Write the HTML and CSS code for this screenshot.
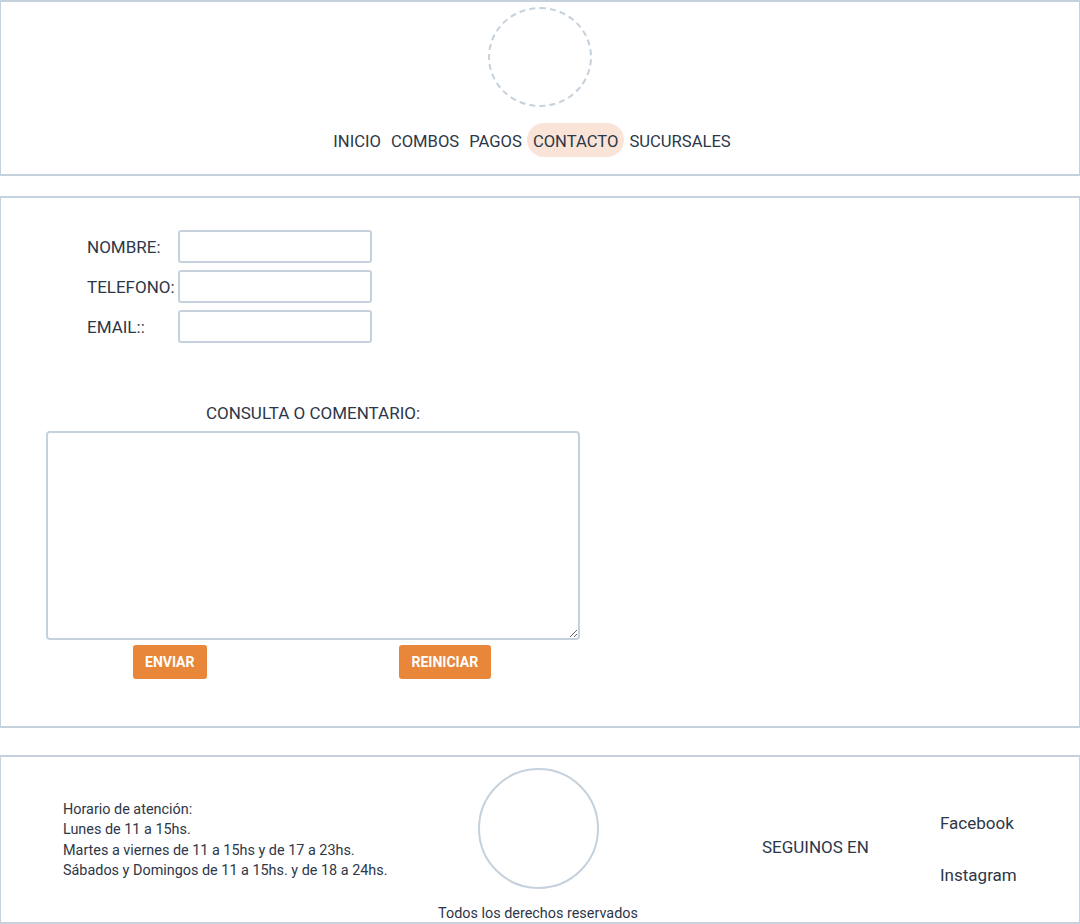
FILE: index.html
```html
<!DOCTYPE html>
<html lang="es">
<head>
<meta charset="utf-8">
<title>Contacto</title>
<link rel="stylesheet" href="styles.css">
</head>
<body>
<header class="header">
  <div class="logo"></div>
  <nav class="nav">
    <a class="nav-item" href="#">INICIO</a>
    <a class="nav-item" href="#">COMBOS</a>
    <a class="nav-item" href="#">PAGOS</a>
    <a class="nav-item active" href="#">CONTACTO</a>
    <a class="nav-item" href="#">SUCURSALES</a>
  </nav>
</header>

<main class="main">
  <form class="form">
    <div class="fields">
      <div class="row"><label class="label">NOMBRE:</label><input class="input" type="text"></div>
      <div class="row"><label class="label">TELEFONO:</label><input class="input" type="text"></div>
      <div class="row"><label class="label">EMAIL::</label><input class="input" type="text"></div>
    </div>
    <div class="consulta">
      <label class="consulta-label">CONSULTA O COMENTARIO:</label>
      <textarea class="textarea"></textarea>
      <div class="buttons">
        <button class="btn" type="submit">ENVIAR</button>
        <button class="btn btn-wide" type="reset">REINICIAR</button>
      </div>
    </div>
  </form>
</main>

<footer class="footer">
  <div class="hours">
    <p>Horario de atención:</p>
    <p>Lunes de 11 a 15hs.</p>
    <p>Martes a viernes de 11 a 15hs y de 17 a 23hs.</p>
    <p>Sábados y Domingos de 11 a 15hs. y de 18 a 24hs.</p>
  </div>
  <div class="center">
    <div class="footer-logo"></div>
    <p class="copy">Todos los derechos reservados</p>
  </div>
  <div class="follow">SEGUINOS EN</div>
  <ul class="social">
    <li><a href="#">Facebook</a></li>
    <li><a href="#">Instagram</a></li>
  </ul>
</footer>
</body>
</html>
```

FILE: styles.css
```css
* { box-sizing: border-box; }

body {
  margin: 0;
  font-family: Roboto, "Liberation Sans", sans-serif;
  color: #2d3748;
  background: #fff;
}

.header {
  border: 1px solid #c5d1dc;
  border-width: 2px 1px;
  display: flex;
  flex-direction: column;
  align-items: center;
  padding: 5px 0 17px;
}

.logo {
  width: 104px;
  height: 100px;
  border: 2px dashed #c5d1dc;
  border-radius: 50%;
}

.nav {
  display: flex;
  margin-top: 16px;
  padding-right: 16px;
}

.nav-item {
  color: #2d3748;
  text-decoration: none;
  font-size: 16.6px;
  line-height: 37px;
  height: 34px;
  padding: 0 5px;
  border-radius: 17px;
}

.nav-item.active {
  background: #f9e4d7;
  padding: 0 6px;
}

.main {
  margin-top: 20px;
  border: 1px solid #c5d1dc;
  border-width: 2px 1px;
  padding: 32px 0 47px 45px;
}

.fields {
  margin-left: 41px;
  display: flex;
  flex-direction: column;
  gap: 7px;
}

.row {
  display: flex;
  align-items: center;
}

.label {
  width: 91px;
  font-size: 17px;
}

.input {
  width: 194px;
  height: 33px;
  border: 2px solid #c5d1dc;
  border-radius: 3px;
  margin: 0;
}

.consulta {
  width: 534px;
  margin-top: 60px;
  display: flex;
  flex-direction: column;
}

.consulta-label {
  text-align: center;
  font-size: 17px;
  line-height: 20px;
}

.textarea {
  margin: 8px 0 0;
  width: 534px;
  height: 209px;
  border: 2px solid #c5d1dc;
  border-radius: 4px;
}

.buttons {
  display: flex;
  gap: 192px;
  padding-left: 87px;
  margin-top: 5px;
}

.btn {
  background: #e8863a;
  color: #fff;
  border: none;
  border-radius: 3px;
  height: 34px;
  padding: 0 12px;
  font-family: Roboto, "Liberation Sans", sans-serif;
  font-weight: 700;
  font-size: 14px;
  margin: 0;
}

.btn-wide {
  padding: 0 13px;
}

.footer {
  margin-top: 27px;
  border: 1px solid #c5d1dc;
  border-width: 2px 1px;
  height: 169px;
  display: flex;
  align-items: flex-start;
  padding-left: 62px;
}

.hours {
  width: 373px;
  margin-top: 43px;
  font-size: 14.4px;
  line-height: 20.3px;
}

.hours p { margin: 0; }

.center {
  width: 204px;
  display: flex;
  flex-direction: column;
  align-items: center;
  padding-top: 11px;
}

.footer-logo {
  width: 121px;
  height: 121px;
  border: 2px solid #c5d1dc;
  border-radius: 50%;
}

.copy {
  margin: 16px 0 0;
  font-size: 14.4px;
  line-height: 18px;
  white-space: nowrap;
}

.follow {
  margin-left: 122px;
  margin-top: 80px;
  font-size: 17px;
  width: 178px;
}

.social {
  list-style: none;
  margin: 56px 0 0;
  padding: 0;
  display: flex;
  flex-direction: column;
  gap: 32px;
  font-size: 17px;
  line-height: 20px;
}

.social a {
  color: #2d3748;
  text-decoration: none;
}
```
